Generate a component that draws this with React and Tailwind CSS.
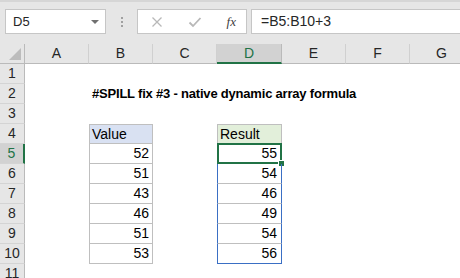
import React from 'react';

const cols = ['A', 'B', 'C', 'D', 'E', 'F', 'G'];
const values = [52, 51, 43, 46, 51, 53];
const results = [55, 54, 46, 49, 54, 56];

function RowHeader({ n }) {
  const active = n === 5;
  return (
    <div
      className={
        'flex items-center justify-center border-b border-[#d4d4d4] text-[14px] ' +
        (active
          ? 'bg-[#d2d2d2] text-[#217346] border-r-2 border-r-[#217346]'
          : 'bg-[#e6e6e6] text-[#262626] border-r border-r-[#bababa]')
      }
    >
      {n}
    </div>
  );
}

function ValueCell({ row }) {
  if (row === 4) {
    return (
      <div className="border border-[#bfbfbf] bg-[#d9e1f2] px-[2px] flex items-center text-[14px] text-black">
        Value
      </div>
    );
  }
  if (row >= 5 && row <= 10) {
    return (
      <div className="border-x border-b border-[#bfbfbf] px-[3px] flex items-center justify-end text-[14px] text-black">
        {values[row - 5]}
      </div>
    );
  }
  return <div />;
}

function ResultCell({ row }) {
  if (row === 4) {
    return (
      <div className="border border-[#bfbfbf] bg-[#e2efda] px-[2px] flex items-center text-[14px] text-black">
        Result
      </div>
    );
  }
  if (row >= 5 && row <= 10) {
    const last = row === 10;
    return (
      <div
        className={
          'relative border-x border-x-[#3a6fc4] px-[4px] flex items-center justify-end text-[14px] text-black ' +
          (last ? 'border-b border-b-[#3a6fc4]' : 'border-b border-b-[#bfbfbf]')
        }
      >
        {results[row - 5]}
        {row === 5 && (
          <>
            <div className="absolute -left-[1px] -top-[1px] -right-[1px] -bottom-[1px] border-2 border-[#217346]" />
            <div className="absolute -right-[4px] -bottom-[4px] w-[7px] h-[7px] bg-[#217346] border border-white" />
          </>
        )}
      </div>
    );
  }
  return <div />;
}

export default function App() {
  const rows = [1, 2, 3, 4, 5, 6, 7, 8, 9, 10, 11];

  return (
    <div
      className="w-[460px] h-[278px] overflow-hidden bg-white"
      style={{ fontFamily: '"Liberation Sans", Arial, sans-serif' }}
    >
      {/* Formula bar */}
      <div className="h-[44px] bg-[#e6e6e6] border-t-2 border-[#d6d6d6] flex items-start pt-[7px] pl-[5px]">
        <div className="w-[101px] h-[25px] bg-white border border-[#c6c6c6] flex items-center justify-between pl-[7px] pr-[6px] text-[13px] text-[#262626]">
          <span>D5</span>
          <span className="w-0 h-0 border-x-[4px] border-x-transparent border-t-[4px] border-t-[#707070]" />
        </div>
        <div className="w-[31px] h-[25px] flex flex-col items-center justify-center gap-[2px]">
          <span className="w-[2px] h-[2px] bg-[#a0a0a0]" />
          <span className="w-[2px] h-[2px] bg-[#a0a0a0]" />
          <span className="w-[2px] h-[2px] bg-[#a0a0a0]" />
        </div>
        <div className="w-[110px] h-[25px] bg-white border border-[#c6c6c6] flex items-center justify-between pl-[13px] pr-[10px]">
          <svg width="12" height="12" viewBox="0 0 12 12">
            <path d="M1.5 1.5 L10.5 10.5 M10.5 1.5 L1.5 10.5" stroke="#b8b8b8" strokeWidth="1.3" fill="none" />
          </svg>
          <svg width="14" height="12" viewBox="0 0 14 12">
            <path d="M1.5 6.5 L5 10 L12.5 2" stroke="#b8b8b8" strokeWidth="1.8" fill="none" />
          </svg>
          <span className="text-[13px] italic text-[#404040]" style={{ fontFamily: '"Liberation Serif", serif' }}>
            fx
          </span>
        </div>
        <div className="ml-[4px] flex-1 h-[25px] bg-white border border-[#c6c6c6] border-r-0 flex items-center pl-[9px] text-[14px] text-[#262626]">
          =B5:B10+3
        </div>
      </div>

      {/* Sheet grid */}
      <div className="grid grid-cols-[25px_64px_64px_64px_65px_64px_64px_64px] auto-rows-[20px]">
        {/* Column headers */}
        <div className="relative bg-[#e6e6e6] border-r border-b border-[#bababa]">
          <div className="absolute right-[3px] bottom-[3px] w-0 h-0 border-l-[12px] border-l-transparent border-b-[12px] border-b-[#bcbcbc]" />
        </div>
        {cols.map((c) =>
          c === 'D' ? (
            <div
              key={c}
              className="bg-[#d2d2d2] border-r border-[#bababa] border-b-2 border-b-[#217346] flex items-center justify-center text-[14px] text-[#217346]"
            >
              {c}
            </div>
          ) : (
            <div
              key={c}
              className="bg-[#e6e6e6] border-r border-[#d0d0d0] border-b border-b-[#bababa] flex items-center justify-center text-[14px] text-[#262626]"
            >
              {c}
            </div>
          )
        )}

        {rows.map((r) => (
          <React.Fragment key={r}>
            <RowHeader n={r} />
            <div />
            {r === 2 ? (
              <div className="col-span-5 flex items-center pl-[3px] text-[13px] tracking-[-0.2px] font-bold text-black whitespace-nowrap">
                #SPILL fix #3 - native dynamic array formula
              </div>
            ) : (
              <>
                <ValueCell row={r} />
                <div />
                <ResultCell row={r} />
                <div />
                <div />
              </>
            )}
            <div />
          </React.Fragment>
        ))}
      </div>
    </div>
  );
}
